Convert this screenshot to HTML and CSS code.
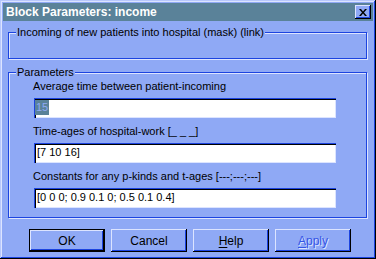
FILE: index.html
```html
<!DOCTYPE html>
<html>
<head>
<meta charset="utf-8">
<link rel="stylesheet" href="styles.css">
</head>
<body>
<div class="win">
  <div class="titlebar">
    <span class="title">Block Parameters: income</span>
    <span class="close"><svg width="8" height="7" viewBox="0 0 8 7"><path d="M0 0h2l2 2.5L6 0h2L5 3.5 8 7H6L4 4.5 2 7H0l3-3.5z" fill="#000"/></svg></span>
  </div>
  <div class="content">
    <div class="grp g1"><div class="legend">Incoming of new patients into hospital (mask) (link)</div></div>
    <div class="grp g2"><div class="legend">Parameters</div>
      <div class="fields">
        <div class="field">
          <div class="lbl">Average time between patient-incoming</div>
          <div class="input"><span class="sel">15</span></div>
        </div>
        <div class="field">
          <div class="lbl">Time-ages of hospital-work [_ _ _]</div>
          <div class="input">[7 10 16]</div>
        </div>
        <div class="field">
          <div class="lbl">Constants for any p-kinds and t-ages [---;---;---]</div>
          <div class="input">[0 0 0; 0.9 0.1 0; 0.5 0.1 0.4]</div>
        </div>
      </div>
    </div>
    <div class="buttons">
      <div class="btn default"><span>OK</span></div>
      <div class="btn"><span>Cancel</span></div>
      <div class="btn"><span><u>H</u>elp</span></div>
      <div class="btn disabled"><span><u>A</u>pply</span></div>
    </div>
  </div>
</div>
</body>
</html>
```
FILE: styles.css
```css
html, body { margin: 0; padding: 0; }
body { width: 376px; height: 259px; overflow: hidden; background: #8fa9f5; font-family: "Liberation Sans", Arial, sans-serif; font-size: 11px; color: #000; }
.win {
  width: 376px; height: 259px; box-sizing: border-box; padding: 3px;
  background: #8fa9f5;
  box-shadow: inset -1px -1px 0 #000, inset 1px 1px 0 #b8c8fc, inset -2px -2px 0 #1c44e0, inset 2px 2px 0 #dce4ff;
  display: flex; flex-direction: column;
}
.titlebar {
  height: 18px; flex: none; background: #5a8299; display: flex; align-items: center; justify-content: space-between;
  padding: 0 2px 0 3px;
}
.title { color: #fff; font-weight: bold; font-size: 12px; }
.close {
  width: 16px; height: 14px; box-sizing: border-box; background: #8fa9f5;
  display: flex; align-items: center; justify-content: center;
  box-shadow: inset -1px -1px 0 #000, inset 1px 1px 0 #dce4ff, inset -2px -2px 0 #1c44e0;
}
.content { padding: 0 6px 0 5px; display: flex; flex-direction: column; }
.grp {
  border: 1px solid #1c44e0;
  box-shadow: inset 1px 1px 0 #dce4ff, 1px 1px 0 #dce4ff;
}
.legend { width: fit-content; margin: -7px 0 0 7px; padding: 0 1px; background: #8fa9f5; line-height: 13px; }
.g1 { margin-top: 11px; height: 27px; box-sizing: border-box; }
.g2 { margin-top: 13px; padding: 0 0 9px 0; }
.fields { display: flex; flex-direction: column; gap: 7px; padding: 1px 30px 0 24px; }
.field { display: flex; flex-direction: column; gap: 5px; }
.lbl { line-height: 13px; }
.input {
  height: 20px; box-sizing: border-box; background: #fff; padding: 3px 3px 0 3px; line-height: 13px;
  box-shadow: inset 1px 1px 0 #1c44e0, inset 2px 2px 0 #000, inset -1px -1px 0 #dce4ff;
  margin-left: 1px;
}
.sel { display: inline-block; background: #5a8299; color: #8fa9f5; margin: -1px 0 0 -2px; padding: 1px 1px; }
.buttons { display: flex; gap: 6px; padding: 11px 0 0 21px; }
.btn {
  width: 76px; height: 23px; box-sizing: border-box; display: flex; align-items: center; justify-content: center;
  box-shadow: inset -1px -1px 0 #000, inset 1px 1px 0 #dce4ff, inset -2px -2px 0 #1c44e0;
  font-size: 12px;
}
.btn.default { box-shadow: inset 0 0 0 1px #000, inset -2px -2px 0 #000, inset 2px 2px 0 #dce4ff, inset -3px -3px 0 #1c44e0; }
.btn u { text-decoration-thickness: 1px; text-underline-offset: 2px; }
.btn.disabled { color: #3455e6; text-shadow: 1px 1px 0 #dce4ff; }
```
